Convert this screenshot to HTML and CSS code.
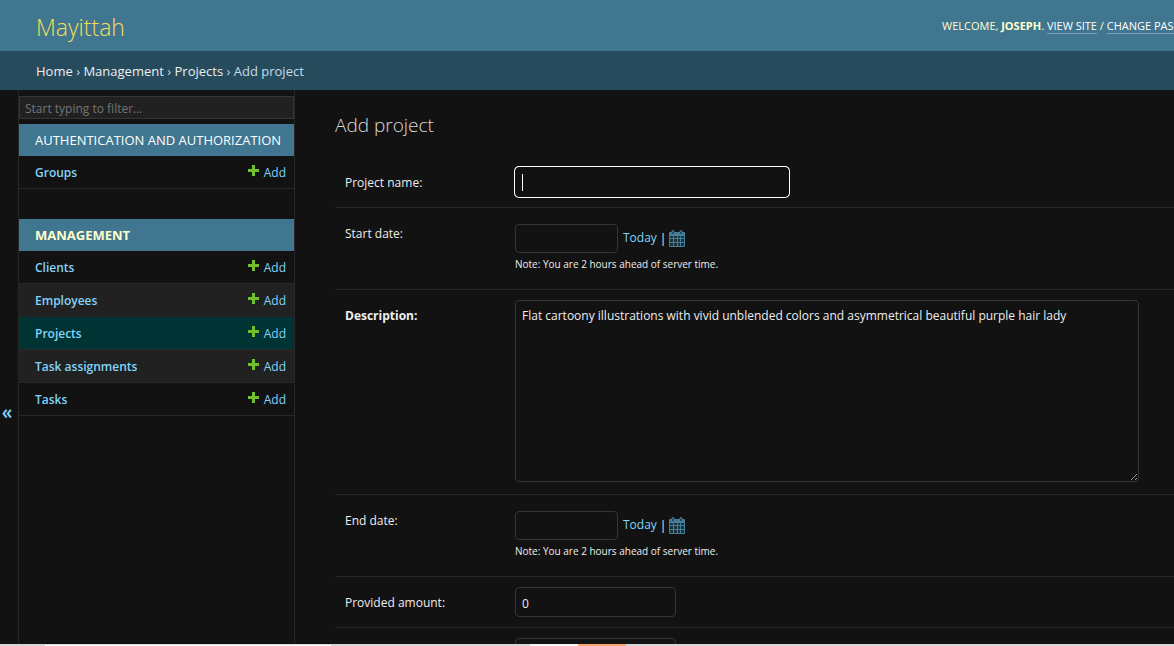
FILE: index.html
```html
<!DOCTYPE html>
<html lang="en">
<head>
<meta charset="utf-8">
<title>Add project | Mayittah</title>
<link rel="stylesheet" href="styles.css">
</head>
<body>
<svg class="sprite" aria-hidden="true">
  <symbol id="plus" viewBox="0 0 11 11"><path fill="#70bf2b" d="M4 0h3v4h4v3H7v4H4V7H0V4h4z"/></symbol>
  <symbol id="calendar" viewBox="0 0 16 17">
    <path fill="#1b323d" d="M1 6h14v10H1z"/>
    <path fill="#447e9b" fill-rule="evenodd" d="M1 2h1.500V1.500a1.500 1.500 0 0 1 3 0V2h5v-.5a1.500 1.500 0 0 1 3 0V2H15a1 1 0 0 1 1 1v13a1 1 0 0 1-1 1H1a1 1 0 0 1-1-1V3a1 1 0 0 1 1-1zM3.500 1.500v2.500h1V1.500zM11.500 1.500v2.500h1V1.500zM1 6v2h3V6zM5 6v2h3V6zM9 6v2h2V6zM12 6v2h3V6zM1 9v3h3V9zM5 9v3h3V9zM9 9v3h2V9zM12 9v3h3V9zM1 13v3h3v-3zM5 13v3h3v-3zM9 13v3h2v-3zM12 13v3h3v-3z"/>
  </symbol>
</svg>
<div class="page">
  <header class="header">
    <a class="brand" href="#">Mayittah</a>
    <div class="user-tools">Welcome, <strong>Joseph</strong>. <a href="#">View site</a> / <a href="#">Change password</a></div>
  </header>
  <nav class="breadcrumbs" aria-label="Breadcrumbs"><a href="#">Home</a> › <a href="#">Management</a> › <a href="#">Projects</a> › Add project</nav>
  <div class="main">
    <button class="toggle" type="button" aria-label="Toggle navigation">«</button>
    <nav class="sidebar" aria-label="Sidebar">
      <input class="filter" type="search" placeholder="Start typing to filter…" aria-label="Filter navigation items">
      <table class="module">
        <caption><a href="#">Authentication and Authorization</a></caption>
        <tbody>
          <tr><th scope="row"><a href="#">Groups</a></th><td><a class="add" href="#"><svg><use href="#plus"/></svg>Add</a></td></tr>
        </tbody>
      </table>
      <table class="module current-app">
        <caption><a href="#">Management</a></caption>
        <tbody>
          <tr><th scope="row"><a href="#">Clients</a></th><td><a class="add" href="#"><svg><use href="#plus"/></svg>Add</a></td></tr>
          <tr><th scope="row"><a href="#">Employees</a></th><td><a class="add" href="#"><svg><use href="#plus"/></svg>Add</a></td></tr>
          <tr class="current"><th scope="row"><a href="#">Projects</a></th><td><a class="add" href="#"><svg><use href="#plus"/></svg>Add</a></td></tr>
          <tr><th scope="row"><a href="#">Task assignments</a></th><td><a class="add" href="#"><svg><use href="#plus"/></svg>Add</a></td></tr>
          <tr><th scope="row"><a href="#">Tasks</a></th><td><a class="add" href="#"><svg><use href="#plus"/></svg>Add</a></td></tr>
        </tbody>
      </table>
    </nav>
    <main class="content">
      <h1>Add project</h1>
      <form>
        <div class="row">
          <label for="name">Project name:</label>
          <div class="focused"><input class="field name" id="name" type="text"></div>
        </div>
        <div class="row">
          <label for="start">Start date:</label>
          <div class="date">
            <div class="date-line"><input class="field day" id="start" type="text"><a href="#">Today</a><span>|</span><a class="cal" href="#" aria-label="Choose start date"><svg><use href="#calendar"/></svg></a></div>
            <p class="note">Note: You are 2 hours ahead of server time.</p>
          </div>
        </div>
        <div class="row tall">
          <label class="required" for="description">Description:</label>
          <textarea class="field" id="description">Flat cartoony illustrations with vivid unblended colors and asymmetrical beautiful purple hair lady</textarea>
        </div>
        <div class="row">
          <label for="end">End date:</label>
          <div class="date">
            <div class="date-line"><input class="field day" id="end" type="text"><a href="#">Today</a><span>|</span><a class="cal" href="#" aria-label="Choose end date"><svg><use href="#calendar"/></svg></a></div>
            <p class="note">Note: You are 2 hours ahead of server time.</p>
          </div>
        </div>
        <div class="row">
          <label for="provided">Provided amount:</label>
          <input class="field amount" id="provided" type="text" value="0">
        </div>
        <div class="row">
          <input class="field amount unlabelled" type="text" aria-label="Amount">
        </div>
      </form>
    </main>
  </div>
  <div class="taskbar"><i class="window"></i><i class="tab"></i><i class="tab active"></i></div>
</div>
</body>
</html>
```
FILE: styles.css
```css
* { box-sizing: border-box; }
body {
  margin: 0;
  background: #121212;
  color: #eee;
  font: 12px/20px "Open Sans", "Noto Sans", sans-serif;
}
a { color: #81d4fa; text-decoration: none; }
input, textarea, button { font: inherit; color: #eee; margin: 0; }
.sprite { position: absolute; width: 0; height: 0; }
.page { display: flex; flex-direction: column; height: 100vh; overflow: hidden; }

.header {
  display: flex;
  flex: none;
  align-items: center;
  justify-content: space-between;
  height: 51px;
  padding-left: 36px;
  background: #417690;
  color: #ffc;
}
.brand { color: #f5dd5d; font-size: 23px; font-weight: 300; line-height: 32px; padding-top: 2px; }
.user-tools {
  flex: 0 0 232px;
  overflow: hidden;
  white-space: nowrap;
  text-transform: uppercase;
  font-size: 11px;
}
.user-tools a { display: inline-block; line-height: 15px; color: #fff; border-bottom: 1px solid #7a9fb1; }
.breadcrumbs {
  flex: none;
  height: 39px;
  padding: 10px 36px;
  background: #264b5d;
  color: #c4dce8;
  font-size: 13px;
}
.breadcrumbs a { color: #eee; }

.main { display: flex; flex: 1; min-height: 0; }
.toggle {
  flex: 0 0 19px;
  padding: 90px 4px 0 0;
  border: 0;
  border-right: 1px solid #272727;
  background: none;
  color: #81d4fa;
  font-size: 19px;
  font-weight: 600;
  cursor: pointer;
}
.sidebar { flex: 0 0 276px; min-width: 0; padding-top: 6px; border-right: 1px solid #272727; }
.filter {
  display: block;
  width: 100%;
  height: 23px;
  margin-bottom: 5px;
  padding: 2px 5px 0;
  border: 1px solid #353535;
  border-radius: 0;
  background: #212121;
  appearance: none;
}
.filter::placeholder { color: #757575; opacity: 1; }
.module { width: 100%; margin-bottom: 30px; border-spacing: 0; }
.module caption {
  height: 32px;
  padding: 6px 8px 6px 16px;
  background: #417690;
  text-align: left;
  text-transform: uppercase;
  white-space: nowrap;
  font-size: 13px;
}
.module caption a { color: #fff; }
.current-app caption a { color: #ffc; font-weight: 700; }
.module th, .module td { height: 33px; padding: 2px 8px 0 16px; border-bottom: 1px solid #272727; }
.module th { text-align: left; font-weight: 600; }
.module tr:nth-child(even) { background: #212121; }
.module .current { background: #033; }
.add { display: flex; align-items: center; justify-content: flex-end; gap: 5px; }
.add svg { width: 11px; height: 11px; margin-bottom: 5px; }

.content { flex: 1; min-width: 0; padding: 22px 0 0 40px; overflow: hidden; }
h1 { margin: 0 0 19px; color: #dadada; font-size: 19px; font-weight: 300; line-height: 26px; }
.row { display: flex; padding: 10px 35px 10px 10px; border-bottom: 1px solid #272727; }
.row label { flex: 0 0 170px; height: 30px; line-height: 32px; }
.row .required { font-weight: 700; }
.field {
  height: 30px;
  padding: 5px 6px 3px;
  border: 1px solid #353535;
  border-radius: 4px;
  background: #121212;
}
.focused { position: relative; }
.focused::after { content: ""; position: absolute; left: 7px; top: 7px; width: 1px; height: 17px; background: #fff; }
.name { display: block; width: 274px; border-color: #121212; box-shadow: 0 0 0 1px #fff; }
.date { padding-top: 6px; }
.date-line { display: flex; align-items: center; gap: 3px; height: 29px; }
.day { width: 103px; height: 29px; margin-right: 2px; }
.date-line a { padding-bottom: 1px; }
.cal svg { display: block; width: 16px; height: 17px; }
.note { margin: 3px 0 7px; font-size: 10px; line-height: 16px; }
.tall { padding-bottom: 12px; }
textarea.field { flex: 1; min-width: 0; height: 182px; resize: vertical; }
.amount { width: 161px; }
.unlabelled { margin-left: 170px; }

.taskbar { display: flex; flex: none; height: 2px; background: #d6d6d6; }
.window { width: 286px; margin: 1px 199px 0 45px; background: #fff; }
.tab { width: 48px; background: #f5f5f5; }
.active { background: #f9a76c; }
```
